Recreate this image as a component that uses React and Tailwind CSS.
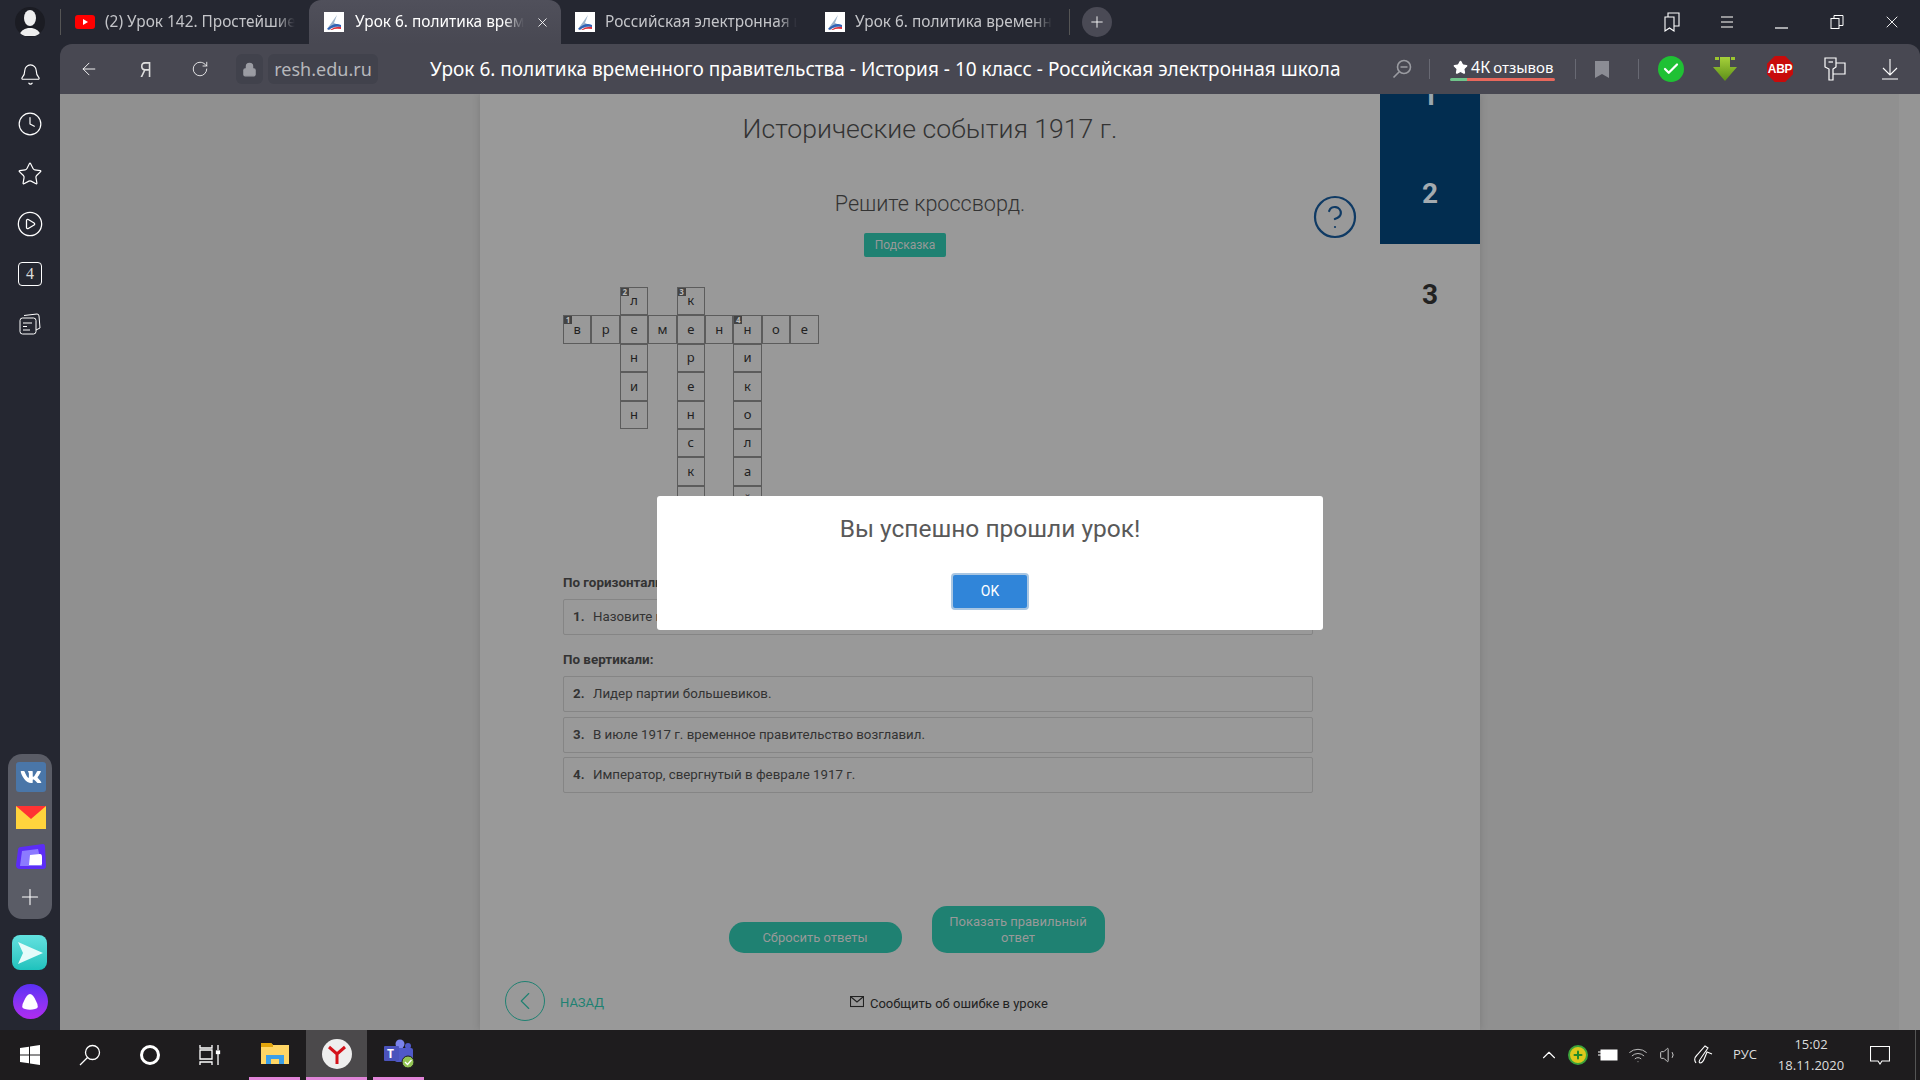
import React from 'react';
import { Bell, Clock, Star, CirclePlay, ArrowLeft, RotateCw, Lock, Plus, X, ChevronUp, ChevronLeft, Check, Volume1, Wifi, CircleHelp } from 'lucide-react';
import { FaVk } from 'react-icons/fa';

const crossword = [
  ['', '', { n: 2, c: 'л' }, '', { n: 3, c: 'к' }, '', '', '', ''],
  [{ n: 1, c: 'в' }, { c: 'р' }, { c: 'е' }, { c: 'м' }, { c: 'е' }, { c: 'н' }, { n: 4, c: 'н' }, { c: 'о' }, { c: 'е' }],
  ['', '', { c: 'н' }, '', { c: 'р' }, '', { c: 'и' }, '', ''],
  ['', '', { c: 'и' }, '', { c: 'е' }, '', { c: 'к' }, '', ''],
  ['', '', { c: 'н' }, '', { c: 'н' }, '', { c: 'о' }, '', ''],
  ['', '', '', '', { c: 'с' }, '', { c: 'л' }, '', ''],
  ['', '', '', '', { c: 'к' }, '', { c: 'а' }, '', ''],
  ['', '', '', '', { c: 'и' }, '', { c: 'й' }, '', ''],
];

const tabs = [
  { title: '(2) Урок 142. Простейшие задачи', yt: true, width: 'w-[248px]' },
  { title: 'Урок 6. политика временного', active: true },
  { title: 'Российская электронная школа', width: 'w-[250px]' },
  { title: 'Урок 6. политика временного', width: 'w-[255px]' },
];

function ReshIcon() {
  return (
    <svg width="20" height="20" viewBox="0 0 20 20" className="shrink-0">
      <rect width="20" height="20" fill="#fff" />
      <path d="M3 17 L13 3 L10 11 L17 14 Z" fill="#9db4cc" />
      <path d="M3 17 Q10 10 17 13 L17 15 Q10 13 5 18 Z" fill="#2f62b5" />
      <path d="M6 18 Q11 14 17 15 L17 17 Q11 16 8 18 Z" fill="#d9333f" />
    </svg>
  );
}

function Tab({ title, yt, active, width }) {
  if (active) {
    return (
      <div className="w-[252px] h-[44px] shrink-0 bg-gradient-to-b from-[#50505b] to-[#484852] rounded-t-[12px] flex items-center pl-[15px] pr-[11px] gap-[11px]">
        <ReshIcon />
        <span className="flex-1 overflow-hidden whitespace-nowrap text-[15.4px] text-white [mask-image:linear-gradient(to_right,black_88%,transparent)]">{title}</span>
        <X size={15} className="text-white shrink-0" strokeWidth={1.4} />
      </div>
    );
  }
  return (
    <div className={`${width} h-[44px] shrink-0 flex items-center pl-[14px] pr-[14px] gap-[10px] text-[15.4px] text-[#c4c5c9]`}>
      {yt ? (
        <svg width="20" height="14" viewBox="0 0 20 14" className="shrink-0">
          <rect width="20" height="14" rx="3" fill="#ff0000" />
          <path d="M8 4 L13 7 L8 10 Z" fill="#fff" />
        </svg>
      ) : <ReshIcon />}
      <span className="overflow-hidden whitespace-nowrap [mask-image:linear-gradient(to_right,black_90%,transparent)]">{title}</span>
    </div>
  );
}

function SideIcon({ children }) {
  return <div className="h-[50px] flex items-center justify-center text-white">{children}</div>;
}

function Cell({ cell }) {
  if (!cell) return <div className="w-[28.4px] h-[28.4px]" />;
  return (
    <div className="relative w-[28.4px] h-[28.4px] border border-[#5c5c5c] flex items-center justify-center text-[13px] text-[#222]">
      {cell.n && <span className="absolute left-0 top-0 w-[8px] h-[8px] bg-[#444] text-[8px] leading-[8px] text-[#bbb] text-center font-bold">{cell.n}</span>}
      {cell.c}
    </div>
  );
}

function Question({ num, text }) {
  return (
    <div className="h-[36px] border border-[#858585] rounded-[2px] flex items-center pl-[9px] text-[13.3px] text-[#333] mb-[4.5px]">
      <b className="w-[20px]">{num}.</b>
      <span>{text}</span>
    </div>
  );
}

function WinBtn({ children }) {
  return <div className="w-[55px] flex items-center justify-center">{children}</div>;
}

export default function App() {
  return (
    <div className="w-[1920px] h-[1080px] overflow-hidden flex flex-col bg-[#252731] font-['Noto_Sans',sans-serif]">
      <div className="flex flex-1 min-h-0">
        {/* левая панель браузера */}
        <div className="w-[60px] shrink-0 flex flex-col items-center">
          <div className="h-[44px] flex items-center justify-center">
            <div className="w-[30px] h-[30px] rounded-full bg-[#1b1c23] flex items-center justify-center overflow-hidden">
              <svg width="24" height="30" viewBox="0 0 24 30">
                <ellipse cx="12" cy="11" rx="6" ry="8" fill="#eee" />
                <path d="M1 29 Q3 22 10 21 L14 21 Q21 22 23 29 Z" fill="#eee" />
              </svg>
            </div>
          </div>
          <div className="mt-[5px]">
            <SideIcon><Bell size={23} strokeWidth={1.2} /></SideIcon>
            <SideIcon><Clock size={26} strokeWidth={1.1} /></SideIcon>
            <SideIcon><Star size={26} strokeWidth={1.1} /></SideIcon>
            <SideIcon><CirclePlay size={28} strokeWidth={1.1} /></SideIcon>
            <SideIcon>
              <div className="w-[24px] h-[24px] border border-white rounded-[4px] flex items-center justify-center text-[16px] text-[#ddd] font-['Liberation_Serif',serif]">4</div>
            </SideIcon>
            <SideIcon>
              <svg width="24" height="24" viewBox="0 0 24 24" fill="none" stroke="#fff" strokeWidth="1">
                <rect x="2" y="6" width="16" height="16" rx="2.5" />
                <path d="M6 3.5 L19 2 Q21 2 21 4 L22 16 L18 18" />
                <path d="M5 11 H14 M5 14.5 H9 M5 18 H12" />
              </svg>
            </SideIcon>
          </div>
          <div className="mt-auto w-[44px] h-[165px] rounded-[14px] bg-[#5a5c66] flex flex-col items-center pt-[8px]">
            <div className="w-[30px] h-[30px] ml-[1px] rounded-[3px] bg-[#4a76a8] flex items-center justify-center text-white">
              <FaVk size={22} />
            </div>
            <svg width="30" height="23" viewBox="0 0 30 23" className="mt-[14px] ml-[1px]">
              <rect width="30" height="23" fill="#ffd43d" />
              <path d="M0 0 H30 L15 13 Z" fill="#ff3333" />
            </svg>
            <svg width="30" height="26" viewBox="0 0 30 26" className="mt-[15px] ml-[1px]">
              <path d="M5 3 L27 0 Q29 0 29 3 L30 22 Q30 25 27 25 L4 25 Q0 25 0 21 L2 6 Q2 3 5 3 Z" fill="#5c2df5" />
              <path d="M6 7 L22 5 L26 22 L4 22 Z" fill="#8c7aff" />
              <path d="M14 11 L24 10 Q26 10 26 13 L26 20 Q26 21 24 21 L13 21 Z" fill="#fff" />
            </svg>
            <Plus size={26} strokeWidth={1} className="text-white mt-[14px] -ml-[1px]" />
          </div>
          <div className="w-[35px] h-[35px] mt-[16px] -ml-[1px] rounded-[8px] bg-gradient-to-b from-[#62e2e0] to-[#1cc2bd] flex items-center justify-center">
            <svg width="28" height="24" viewBox="0 0 28 24"><path d="M2 1 L27 12 L2 23 L7 12 Z" fill="#e6fbfa" /></svg>
          </div>
          <div className="w-[35px] h-[35px] mt-[14px] mb-[11px] rounded-full bg-gradient-to-b from-[#5a2ff5] to-[#b02af0] flex items-center justify-center">
            <svg width="20" height="18" viewBox="0 0 20 18"><path d="M10 1 Q13 1 16 8 Q20 15 15 16 Q10 17.5 5 16 Q0 15 4 8 Q7 1 10 1 Z" fill="#fff" /></svg>
          </div>
        </div>

        <div className="flex-1 min-w-0 flex flex-col">
          {/* вкладки */}
          <div className="h-[44px] shrink-0 flex items-center">
            <div className="w-px h-[26px] bg-[#555]" />
            {tabs.map((t, i) => <Tab key={i} {...t} />)}
            <div className="w-px h-[26px] bg-[#555] ml-[3px]" />
            <div className="w-[30px] h-[30px] ml-[12px] rounded-full bg-[#4a4a55] flex items-center justify-center">
              <Plus size={18} strokeWidth={1.2} className="text-white" />
            </div>
            <div className="ml-auto flex items-center pr-[1px] text-white">
              <WinBtn>
                <svg width="16" height="20" viewBox="0 0 16 20" fill="none" stroke="#fff" strokeWidth="1.1">
                  <path d="M1 5 H10 V19 L5.5 16 L1 19 Z" />
                  <path d="M4 5 V1 H15 V14 L10 14" />
                </svg>
              </WinBtn>
              <WinBtn>
                <svg width="12" height="12" viewBox="0 0 12 12" stroke="#bbb" strokeWidth="1.4"><path d="M0 1 H12 M0 6 H12 M0 11 H12" /></svg>
              </WinBtn>
              <WinBtn>
                <svg width="13" height="14" viewBox="0 0 13 14" stroke="#fff" strokeWidth="1.2"><path d="M0 13 H13" /></svg>
              </WinBtn>
              <WinBtn>
                <svg width="14" height="14" viewBox="0 0 14 14" fill="none" stroke="#fff" strokeWidth="1"><rect x="1" y="3.5" width="8" height="10" /><path d="M4 3.5 V0.5 H13 V10.5 H9" /></svg>
              </WinBtn>
              <WinBtn>
                <X size={20} strokeWidth={1.1} />
              </WinBtn>
            </div>
          </div>

          {/* панель адреса */}
          <div className="h-[50px] shrink-0 bg-[#484852] rounded-t-[12px] flex items-center text-white">
            <ArrowLeft size={20} strokeWidth={1.1} className="ml-[19px]" />
            <span className="ml-[39px] w-[14px] text-center text-[22px] text-[#ddd] font-['Liberation_Sans',sans-serif] scale-x-75">Я</span>
            <RotateCw size={18} strokeWidth={1.1} className="ml-[39px]" />
            <div className="ml-[27px] w-[27px] h-[30px] rounded-[6px] bg-[#41424c] flex items-center justify-center">
              <Lock size={15} fill="#9b9ca3" stroke="#9b9ca3" />
            </div>
            <div className="ml-[5px] w-[110px] h-[30px] rounded-[6px] bg-[#41424c] flex items-center justify-center text-[18px] text-[#b6b7bb]">resh.edu.ru</div>
            <span className="ml-[52px] w-[911px] shrink-0 text-[19px] whitespace-nowrap">Урок 6. политика временного правительства - История - 10 класс - Российская электронная школа</span>
            <svg width="20" height="20" viewBox="0 0 20 20" fill="none" stroke="#9a9ba1" strokeWidth="1.6" className="ml-[51px]">
              <circle cx="12" cy="8" r="6.5" />
              <path d="M8.5 8 H15.5 M7 13 L1.5 18.5" />
            </svg>
            <div className="w-px h-[20px] bg-[#686973] ml-[17px]" />
            <div className="ml-[20px] w-[105px] flex flex-col">
              <div className="flex items-center h-[20px] pl-[3px] gap-[3px] whitespace-nowrap">
                <Star size={15} fill="#fff" stroke="#fff" />
                <span className="text-[16px]">4К</span>
                <span className="text-[15px]">отзывов</span>
              </div>
              <div className="h-[3px] flex mt-[1px] rounded-full overflow-hidden">
                <div className="w-[17px] bg-[#70c48a]" />
                <div className="flex-1 bg-[#e8685c]" />
              </div>
            </div>
            <div className="w-px h-[20px] bg-[#686973] ml-[20px]" />
            <svg width="18" height="20" viewBox="0 0 18 20" fill="#8b8c94" className="ml-[17px]"><path d="M2 2 H16 V19 L9 15 L2 19 Z" /></svg>
            <div className="w-px h-[20px] bg-[#686973] ml-[27px]" />
            <div className="ml-[19px] w-[26px] h-[26px] rounded-full bg-[#1fc134] flex items-center justify-center">
              <Check size={18} strokeWidth={3} />
            </div>
            <svg width="26" height="26" viewBox="0 0 26 26" className="ml-[28px]">
              <defs>
                <linearGradient id="dl" x1="0" y1="0" x2="0" y2="1">
                  <stop offset="0" stopColor="#a6d13a" />
                  <stop offset="1" stopColor="#5c8f18" />
                </linearGradient>
              </defs>
              <path d="M3 1 H7 V4 H3 Z M19 1 H23 V4 H19 Z" fill="#9bc62f" />
              <path d="M8 1 H18 V11 H25 L13 25 L1 11 H8 Z" fill="url(#dl)" />
            </svg>
            <div className="ml-[29px] w-[26px] h-[26px] bg-[#c80b0b] [clip-path:polygon(30%_0,70%_0,100%_30%,100%_70%,70%_100%,30%_100%,0_70%,0_30%)] flex items-center justify-center text-[12px] tracking-[-0.3px] font-bold font-['Liberation_Sans',sans-serif]">ABP</div>
            <svg width="24" height="26" viewBox="0 0 24 26" fill="none" stroke="#fff" strokeWidth="1.2" className="ml-[30px]">
              <path d="M2 2 H13 V11 L10 13 V24 H6 V13 L2 11 Z" />
              <path d="M5.5 6 H10" />
              <path d="M13 7 H22 V18 H10" />
            </svg>
            <svg width="20" height="22" viewBox="0 0 20 22" fill="none" stroke="#fff" strokeWidth="1.1" className="ml-[33px]">
              <path d="M10 1 V16 M3 10 L10 17 L17 10 M2 21 H18" />
            </svg>
          </div>

          {/* содержимое страницы под затемнением */}
          <div className="relative flex-1 min-h-0 bg-[#909090] overflow-hidden flex">
            <div className="flex-1 min-w-0">
              <div className="w-[1000px] h-full ml-[420px] bg-[#999999] flex shadow-[0_0_8px_rgba(0,0,0,0.15)]">
                <div className="w-[900px] shrink-0 relative">
                  <h1 className="mt-[18px] text-center text-[26.6px] leading-[34px] font-light text-[#333] font-['Roboto',sans-serif]">Исторические события 1917 г.</h1>
                  <p className="mt-[44px] w-[900px] text-center text-[21.6px] leading-[28px] font-light text-[#333] font-['Roboto',sans-serif]">Решите кроссворд.</p>
                  <div className="mt-[15px] flex justify-center pr-[50px]">
                    <div className="w-[82px] h-[24px] rounded-[2px] bg-[#1f8172] flex items-center justify-center text-[12px] text-[#999] font-['Roboto',sans-serif]">Подсказка</div>
                  </div>
                  <div className="ml-[83px] mt-[30px] h-[287px] overflow-hidden">
                    {crossword.map((row, i) => (
                      <div key={i} className="flex">
                        {row.map((cell, j) => <Cell key={j} cell={cell} />)}
                      </div>
                    ))}
                  </div>
                  <div className="ml-[83px] w-[750px] font-['Roboto',sans-serif]">
                    <p className="mb-[7px] text-[13.4px] leading-[18px] font-bold text-[#333]">По горизонтали:</p>
                    <Question num="1" text="Назовите правительство, созданное в феврале 1917 г." />
                    <p className="mt-[16px] mb-[7px] text-[13.4px] leading-[18px] font-bold text-[#333]">По вертикали:</p>
                    <Question num="2" text="Лидер партии большевиков." />
                    <Question num="3" text="В июле 1917 г. временное правительство возглавил." />
                    <Question num="4" text="Император, свергнутый в феврале 1917 г." />
                  </div>
                  <div className="mt-[113px] flex justify-center gap-[30px] items-end pr-[27px] font-['Roboto',sans-serif]">
                    <div className="w-[173px] h-[31px] rounded-[15px] bg-[#1f8172] flex items-center justify-center text-[13px] text-[#999]">Сбросить ответы</div>
                    <div className="w-[173px] h-[47px] rounded-[15px] bg-[#1f8172] flex items-center justify-center text-center text-[13px] leading-[16px] text-[#999]">Показать правильный ответ</div>
                  </div>
                  <div className="mt-[28px] ml-[25px] flex items-center font-['Roboto',sans-serif]">
                    <div className="w-[40px] h-[40px] rounded-full border border-[#1f8172] flex items-center justify-center text-[#1f8172]">
                      <ChevronLeft size={30} strokeWidth={0.9} />
                    </div>
                    <span className="ml-[15px] mt-[4px] text-[13px] text-[#1f8172]">НАЗАД</span>
                    <svg width="14" height="12" viewBox="0 0 14 12" fill="none" stroke="#222" strokeWidth="1.1" className="ml-[246px] mt-[2px]">
                      <rect x="0.5" y="0.5" width="13" height="10" />
                      <path d="M1 1 L7 6 L13 1" />
                    </svg>
                    <span className="ml-[6px] mt-[6px] text-[13px] text-[#222]">Сообщить об ошибке в уроке</span>
                  </div>
                  <CircleHelp size={48} strokeWidth={1.1} className="absolute left-[831px] top-[99px] text-[#0f3a64]" />
                </div>
                <div className="w-[100px] shrink-0 font-['Roboto',sans-serif] text-[28px] font-bold">
                  <div className="h-[150px] bg-[#022d50] flex flex-col items-center relative overflow-hidden">
                    <span className="absolute top-[-19px] text-[#9aa6ae]">1</span>
                    <span className="absolute top-[79px] text-[#a4abb0]">2</span>
                  </div>
                  <div className="h-[101px] flex items-center justify-center text-[#222]">3</div>
                </div>
              </div>
            </div>
            <div className="w-[21px] shrink-0 bg-[#959595]" />

            {/* окно сообщения */}
            <div className="absolute left-[597px] top-[402px] w-[666px] h-[134px] bg-white rounded-[3px] flex flex-col items-center font-['Roboto',sans-serif]">
              <h2 className="mt-[15px] text-[24.5px] leading-[36px] text-[#595959]">Вы успешно прошли урок!</h2>
              <div className="mt-[26px] w-[78px] h-[37px] rounded-[4px] bg-[#3085d9] border-2 border-[#a9c6e2] flex items-center justify-center text-[14px] text-white">OK</div>
            </div>
          </div>
        </div>
      </div>

      {/* панель задач */}
      <div className="h-[50px] shrink-0 bg-[#1e1c1e] flex items-center text-white font-['Open_Sans',sans-serif]">
        <div className="w-[60px] flex justify-center">
          <svg width="20" height="20" viewBox="0 0 20 20" fill="#fff"><path d="M0 3 L9 1.7 V9.5 H0 Z M10 1.5 L20 0 V9.5 H10 Z M0 10.5 H9 V18.3 L0 17 Z M10 10.5 H20 V20 L10 18.5 Z" /></svg>
        </div>
        <div className="w-[60px] flex justify-center">
          <svg width="22" height="22" viewBox="0 0 22 22" fill="none" stroke="#fff" strokeWidth="1.3"><circle cx="13.5" cy="8.5" r="7" /><path d="M8.5 13.5 L1 21" /></svg>
        </div>
        <div className="w-[60px] flex justify-center"><div className="w-[20px] h-[20px] rounded-full border-[3px] border-white" /></div>
        <div className="w-[60px] flex justify-center">
          <svg width="22" height="20" viewBox="0 0 22 20" fill="none" stroke="#fff" strokeWidth="1.3"><path d="M1 0 V3 H13 V0 M1 5 H13 V14 H1 Z M1 20 V17 H13 V20 M19 0 V5 M19 9 V20" /><rect x="17.5" y="6" width="3" height="2.5" fill="#fff" /></svg>
        </div>
        <div className="w-[51px] h-full ml-[9px] flex flex-col items-center">
          <div className="flex-1 flex items-center">
            <svg width="28" height="24" viewBox="0 0 28 24"><path d="M0 1 H10 L12 3 H28 V22 H0 Z" fill="#ffd665" /><path d="M0 1 H10 L12 3 V5 H0 Z" fill="#e2a50c" /><path d="M5 22 V13 H23 V22 H18 V17 H10 V22 Z" fill="#3b9fe8" /></svg>
          </div>
          <div className="w-full h-[3px] bg-[#e084d8]" />
        </div>
        <div className="w-[61px] h-full ml-[6px] bg-[#4b494b] flex flex-col items-center">
          <div className="flex-1 flex items-center">
            <div className="w-[30px] h-[30px] rounded-full bg-[#eeeeee] flex items-center justify-center">
              <svg width="20" height="20" viewBox="0 0 20 20" fill="none" stroke="#d4121a" strokeWidth="3"><path d="M2 3 L10 10 L18 3 M10 10 V20" /></svg>
            </div>
          </div>
          <div className="w-full h-[3px] bg-[#e084d8]" />
        </div>
        <div className="w-[51px] h-full ml-[6px] flex flex-col items-center">
          <div className="flex-1 flex items-center">
            <svg width="32" height="30" viewBox="0 0 32 30">
              <circle cx="17" cy="5" r="4.5" fill="#7b83eb" />
              <circle cx="25" cy="7" r="3" fill="#5059c9" />
              <rect x="12" y="9" width="18" height="14" rx="2" fill="#5059c9" />
              <rect x="1" y="7" width="15" height="15" rx="1" fill="#4b53bc" />
              <text x="4" y="19" fontSize="12" fontWeight="700" fill="#fff">T</text>
              <circle cx="25" cy="23" r="6" fill="#92c353" stroke="#1e1c1e" />
              <path d="M22 23 L24.5 25.5 L28.5 21" stroke="#fff" strokeWidth="1.3" fill="none" />
            </svg>
          </div>
          <div className="w-full h-[3px] bg-[#e084d8]" />
        </div>
        <div className="ml-auto flex items-center">
          <ChevronUp size={22} strokeWidth={1.2} />
          <div className="ml-[8px] w-[20px] h-[20px] rounded-full bg-[#dcc81c] border-2 border-[#3da33a] flex items-center justify-center">
            <Plus size={12} strokeWidth={4} className="text-[#1f8a2a]" />
          </div>
          <svg width="20" height="12" viewBox="0 0 20 12" className="ml-[10px]">
            <path d="M0 3 H3 M0 6 H3" stroke="#fff" />
            <rect x="3" y="1" width="16" height="10" fill="#fff" stroke="#fff" />
          </svg>
          <Wifi size={20} strokeWidth={1.2} className="ml-[10px] text-[#bbb]" />
          <Volume1 size={20} strokeWidth={1.2} className="ml-[11px] text-[#ccc]" />
          <svg width="20" height="20" viewBox="0 0 20 20" fill="none" stroke="#fff" strokeWidth="1.1" className="ml-[14px]">
            <path d="M3 18 Q0 14 4 10 L12 1 L15 3 L8 13 Q5 17 7 18 Q10 18 12 12 L14 7 L19 9" />
          </svg>
          <span className="ml-[20px] text-[13px] text-[#ddd]">РУС</span>
          <div className="ml-[18px] w-[72px] flex flex-col items-center text-[13px] leading-[21px] text-[#ddd]">
            <span>15:02</span>
            <span>18.11.2020</span>
          </div>
          <svg width="20" height="19" viewBox="0 0 20 19" fill="none" stroke="#fff" strokeWidth="1.1" className="ml-[23px] mr-[25px]">
            <path d="M0.5 0.5 H19.5 V15 H12 L10 18 L8 15 H0.5 Z" />
          </svg>
          <div className="w-px h-[50px] bg-[#555]" />
          <div className="w-[4px]" />
        </div>
      </div>
    </div>
  );
}
